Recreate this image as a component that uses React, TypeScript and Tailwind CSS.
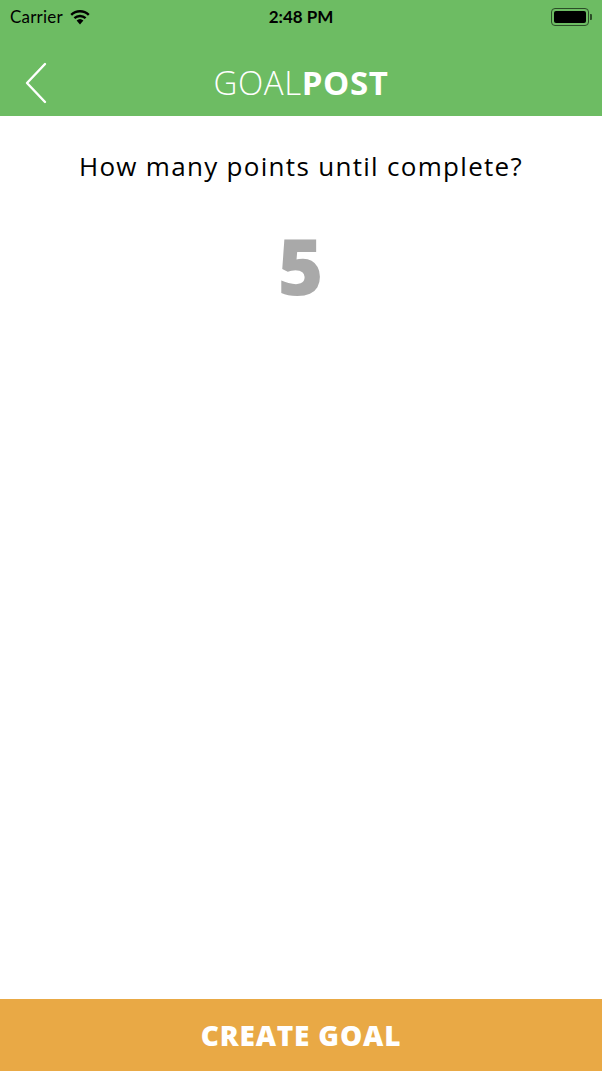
import React from "react";

export default function App() {
  return (
    <div className="w-[602px] h-[1071px] flex flex-col bg-white" style={{ fontFamily: "'Open Sans', Lato, sans-serif" }}>
      <div className="bg-[#6dbc63] h-[116px] flex flex-col">
        <div className="h-[33px] flex items-center justify-between px-[10px] text-black text-[17px]" style={{ fontFamily: "Lato, sans-serif" }}>
          <div className="flex items-center gap-[6px] w-[150px]">
            <span className="tracking-[0.2px]">Carrier</span>
            <svg width="22" height="16" viewBox="0 0 22 16">
              <path d="M11 15.5 L7.6 11.6 A5 5 0 0 1 14.4 11.6 Z" fill="black" />
              <path d="M5.4 9.2 A8.2 8.2 0 0 1 16.6 9.2" stroke="black" strokeWidth="2.4" fill="none" />
              <path d="M2.2 5.8 A12.6 12.6 0 0 1 19.8 5.8" stroke="black" strokeWidth="2.4" fill="none" />
            </svg>
          </div>
          <span className="font-bold">2:48 PM</span>
          <div className="w-[150px] flex justify-end">
            <div className="flex items-center">
              <div className="w-[38px] h-[18px] rounded-[4px] border-[1.5px] border-[#2b4d27] p-[2px]">
                <div className="w-full h-full bg-black rounded-[2px]" />
              </div>
              <div className="w-[2px] h-[6px] bg-[#2b4d27] rounded-r-[1px] ml-[1px]" />
            </div>
          </div>
        </div>
        <div className="flex-1 relative flex items-center justify-center">
          <svg className="absolute left-[24px] top-[29px]" width="24" height="42" viewBox="0 0 24 42">
            <path d="M21 2 L3 21 L21 40" stroke="white" strokeWidth="2.4" fill="none" strokeLinecap="round" strokeLinejoin="round" />
          </svg>
          <div className="text-white text-[33px] leading-none pt-[16px] tracking-[0.6px]">
            <span className="font-light">GOAL</span>
            <span className="font-bold">POST</span>
          </div>
        </div>
      </div>
      <div className="flex-1 flex flex-col items-center">
        <div className="mt-[37px] text-[26px] text-black leading-none tracking-[1.3px]">How many points until complete?</div>
        <div className="mt-[47px] text-[78px] font-extrabold text-[#a9a9a9] leading-none tracking-[1px]">5</div>
      </div>
      <div className="h-[72px] bg-[#e9a945] flex items-center justify-center text-white text-[28px] font-extrabold tracking-[0.8px]">
        CREATE GOAL
      </div>
    </div>
  );
}
